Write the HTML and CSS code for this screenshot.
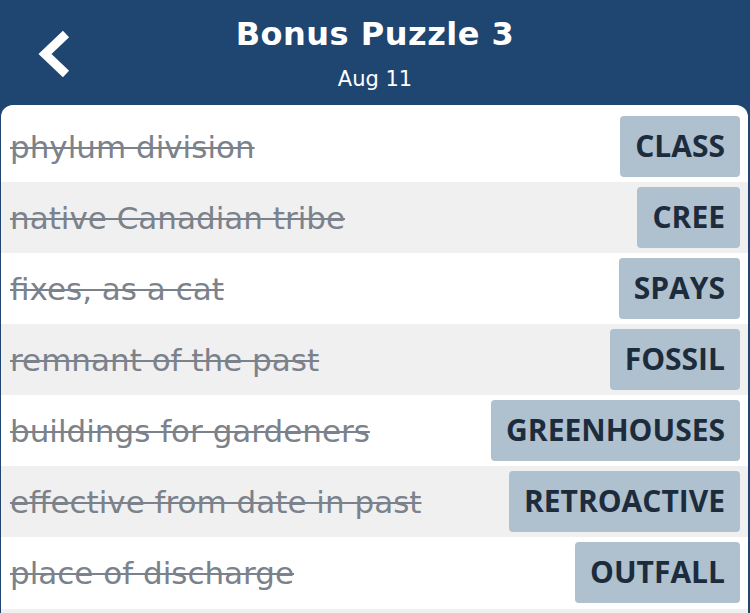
FILE: index.html
```html
<!DOCTYPE html>
<html lang="en">
<head>
    <meta charset="UTF-8">
    <meta name="viewport" content="width=device-width, initial-scale=1.0">
    <title>Bonus Puzzle 3</title>
    <link rel="stylesheet" href="styles.css">
</head>
<body>
    <header class="top-bar">
        <a class="back" href="#">
            <svg width="34" height="50" viewBox="0 0 34 50">
                <path d="M29 5 L8 25 L29 45" fill="none" stroke="#fff" stroke-width="9" stroke-linecap="butt"/>
            </svg>
        </a>
        <h1>Bonus Puzzle 3</h1>
        <div class="date">Aug 11</div>
    </header>

    <div class="card">
        <div class="row">
            <span class="clue">phylum division</span>
            <span class="answer">CLASS</span>
        </div>
        <div class="row alt">
            <span class="clue">native Canadian tribe</span>
            <span class="answer">CREE</span>
        </div>
        <div class="row">
            <span class="clue">fixes, as a cat</span>
            <span class="answer">SPAYS</span>
        </div>
        <div class="row alt">
            <span class="clue">remnant of the past</span>
            <span class="answer">FOSSIL</span>
        </div>
        <div class="row">
            <span class="clue">buildings for gardeners</span>
            <span class="answer">GREENHOUSES</span>
        </div>
        <div class="row alt">
            <span class="clue">effective from date in past</span>
            <span class="answer">RETROACTIVE</span>
        </div>
        <div class="row">
            <span class="clue">place of discharge</span>
            <span class="answer">OUTFALL</span>
        </div>
    </div>
</body>
</html>
```

FILE: styles.css
```css
html, body {
    margin: 0;
    padding: 0;
}
body {
    font-family: "DejaVu Sans", "Open Sans", sans-serif;
    background-color: #1f4571;
    height: 613px;
    overflow: hidden;
}
.top-bar {
    position: relative;
    height: 105px;
    box-sizing: border-box;
    padding-top: 16px;
    text-align: center;
    color: white;
}
.back {
    position: absolute;
    left: 37px;
    top: 29px;
    display: block;
    line-height: 0;
}
.top-bar h1 {
    margin: 0;
    font-size: 32px;
    font-weight: bold;
    line-height: 36px;
    letter-spacing: 0.5px;
}
.date {
    margin-top: 13px;
    font-size: 21px;
    line-height: 28px;
}
.card {
    background: white;
    margin: 0 2px 0 1px;
    border-radius: 12px 12px 0 0;
    padding-top: 6px;
    height: 502px;
    box-shadow: inset 0 -4px 0 #f0f0f0;
}
.row {
    height: 71px;
    display: flex;
    align-items: center;
    justify-content: space-between;
    padding: 0 8px 0 9px;
}
.row.alt {
    background: #f0f0f0;
}
.clue {
    font-size: 31px;
    color: #7b828b;
    text-decoration: line-through;
    text-decoration-thickness: 2px;
}
.answer {
    font-family: "Open Sans", sans-serif;
    background: #afc0cf;
    color: #1c2c3c;
    font-weight: bold;
    font-size: 30px;
    height: 61px;
    line-height: 59px;
    padding: 0 15px;
    border-radius: 4px;
}
```
